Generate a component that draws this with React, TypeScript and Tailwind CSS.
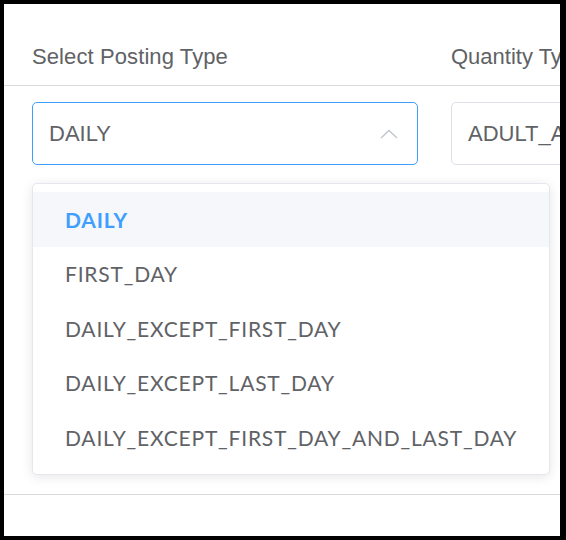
import React from "react";

const options = [
  "DAILY",
  "FIRST_DAY",
  "DAILY_EXCEPT_FIRST_DAY",
  "DAILY_EXCEPT_LAST_DAY",
  "DAILY_EXCEPT_FIRST_DAY_AND_LAST_DAY",
];

export default function App() {
  return (
    <div className="w-[566px] h-[540px] bg-black pt-[4px] pl-[4px] pr-[6px] pb-[4px]">
      <div className="relative w-full h-full bg-white overflow-hidden font-['Liberation_Sans',Arial,sans-serif]">
        {/* header row */}
        <div className="flex h-[82px] items-end pb-[15px] border-b border-[#d9d9d9] pl-[28px] gap-[33px]">
          <div className="w-[386px] shrink-0 text-[22px] leading-[26px] tracking-[0.1px] text-[#606266]">Select Posting Type</div>
          <div className="shrink-0 whitespace-nowrap text-[22px] leading-[26px] text-[#606266]">Quantity Type</div>
        </div>
        {/* body row */}
        <div className="relative h-[409px] border-b border-[#d9d9d9] pt-[16px] pl-[28px] flex gap-[33px]">
          <div className="relative w-[386px] shrink-0">
            <div className="h-[63px] rounded-[5px] border border-[#409eff] flex items-center pl-[16px] pr-[19px] justify-between">
              <span className="text-[22px] text-[#606266]">DAILY</span>
              <svg width="18" height="10" viewBox="0 0 18 10" fill="none">
                <path d="M1 9 L9 1.5 L17 9" stroke="#c0c4cc" strokeWidth="1.3" />
              </svg>
            </div>
            <div className="absolute left-0 top-[81px] w-[518px] z-10 rounded-[5px] border border-[#e4e7ed] bg-white shadow-[0_2px_12px_0_rgba(0,0,0,0.1)] pt-[8px] pb-[9px] font-['Lato','Noto_Sans',sans-serif]">
              {options.map((o, i) => (
                <div
                  key={o}
                  className={
                    "h-[54.6px] flex items-center pl-[32px] text-[21px] tracking-[0.8px] whitespace-nowrap " +
                    (i === 0 ? "bg-[#f5f7fa] text-[#409eff] font-bold" : "text-[#606266]")
                  }
                >
                  {o}
                </div>
              ))}
            </div>
          </div>
          <div className="w-[200px] shrink-0">
            <div className="h-[63px] rounded-[5px] border border-[#dcdfe6] flex items-center pl-[16px]">
              <span className="text-[22px] text-[#606266] whitespace-nowrap">ADULT_AND_CHILD</span>
            </div>
          </div>
        </div>
      </div>
    </div>
  );
}
